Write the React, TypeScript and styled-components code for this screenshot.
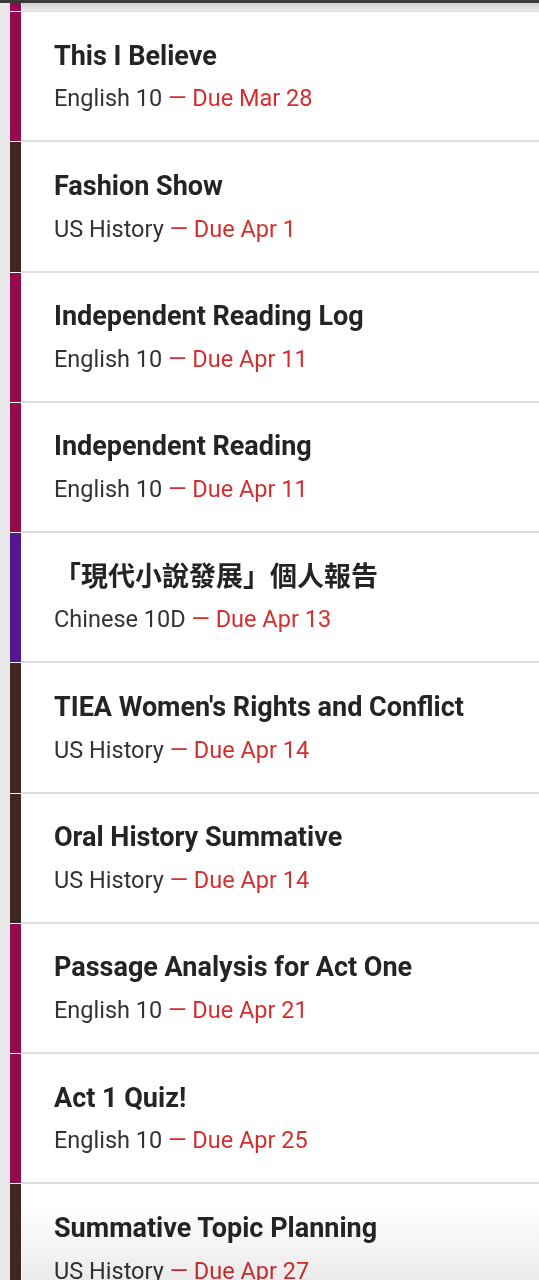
import React from "react";
import styled, { createGlobalStyle } from "styled-components";

const COLORS = {
  english: "#930b4d",
  history: "#3e2723",
  chinese: "#55178f",
};

type Item = {
  title: string;
  course: string;
  due: string;
  color: string;
};

const items: Item[] = [
  { title: "This I Believe", course: "English 10", due: "Due Mar 28", color: COLORS.english },
  { title: "Fashion Show", course: "US History", due: "Due Apr 1", color: COLORS.history },
  { title: "Independent Reading Log", course: "English 10", due: "Due Apr 11", color: COLORS.english },
  { title: "Independent Reading", course: "English 10", due: "Due Apr 11", color: COLORS.english },
  { title: "「現代小說發展」個人報告", course: "Chinese 10D", due: "Due Apr 13", color: COLORS.chinese },
  { title: "TIEA Women's Rights and Conflict", course: "US History", due: "Due Apr 14", color: COLORS.history },
  { title: "Oral History Summative", course: "US History", due: "Due Apr 14", color: COLORS.history },
  { title: "Passage Analysis for Act One", course: "English 10", due: "Due Apr 21", color: COLORS.english },
  { title: "Act 1 Quiz!", course: "English 10", due: "Due Apr 25", color: COLORS.english },
  { title: "Summative Topic Planning", course: "US History", due: "Due Apr 27", color: COLORS.history },
];

const GlobalStyle = createGlobalStyle`
  html, body {
    margin: 0;
    padding: 0;
    background: #e9e9e9;
  }
  body {
    font-family: Roboto, "Noto Sans CJK TC", "Liberation Sans", sans-serif;
    -webkit-font-smoothing: antialiased;
  }
`;

const Viewport = styled.div`
  position: relative;
  width: 539px;
  height: 1280px;
  overflow: hidden;
  background: #e9e9e9;
  padding-left: 10px;
  box-sizing: border-box;
`;

const TopBar = styled.div`
  position: absolute;
  top: 0;
  left: 0;
  right: 0;
  height: 3px;
  background: #3a3a3a;
  z-index: 3;
`;

const TopShade = styled.div`
  position: absolute;
  top: 3px;
  left: 22px;
  right: 0;
  height: 8px;
  background: linear-gradient(#cfcfcf, #eeeeee);
  z-index: 2;
`;

const BottomFade = styled.div`
  position: absolute;
  left: 22px;
  right: 0;
  bottom: 0;
  height: 75px;
  background: linear-gradient(#ffffff, #ebebeb);
  mix-blend-mode: multiply;
  z-index: 2;
  pointer-events: none;
`;

const List = styled.div`
  display: flex;
  flex-direction: column;
  padding-top: 3px;
`;

const Row = styled.div<{ $stub?: boolean }>`
  display: flex;
  background: #fff;
  height: ${(p) => (p.$stub ? "9px" : "130.25px")};
  flex-shrink: 0;
`;

const Bar = styled.div<{ $color: string }>`
  width: 11px;
  flex-shrink: 0;
  background: ${(p) => p.$color};
  margin-bottom: 1px;
`;

const Body = styled.div<{ $stub?: boolean }>`
  flex: 1;
  min-width: 0;
  padding: ${(p) => (p.$stub ? "0" : "27.6px 0 0 33px")};
  border-bottom: 2px solid #dddddd;
`;

const Title = styled.div`
  font-size: 27px;
  line-height: 32px;
  font-weight: 700;
  color: #242424;
  white-space: nowrap;
`;

const Meta = styled.div`
  margin-top: 12.7px;
  font-size: 23.5px;
  line-height: 28px;
  color: #333333;
  white-space: nowrap;
`;

const Due = styled.span`
  color: #d32f2f;
`;

export default function App() {
  return (
    <>
      <GlobalStyle />
      <Viewport>
        <TopBar />
        <TopShade />
        <List>
          <Row $stub>
            <Bar $color={COLORS.english} />
            <Body $stub />
          </Row>
          {items.map((it) => (
            <Row key={it.title}>
              <Bar $color={it.color} />
              <Body>
                <Title>{it.title}</Title>
                <Meta>
                  {it.course} <Due>— {it.due}</Due>
                </Meta>
              </Body>
            </Row>
          ))}
        </List>
        <BottomFade />
      </Viewport>
    </>
  );
}
